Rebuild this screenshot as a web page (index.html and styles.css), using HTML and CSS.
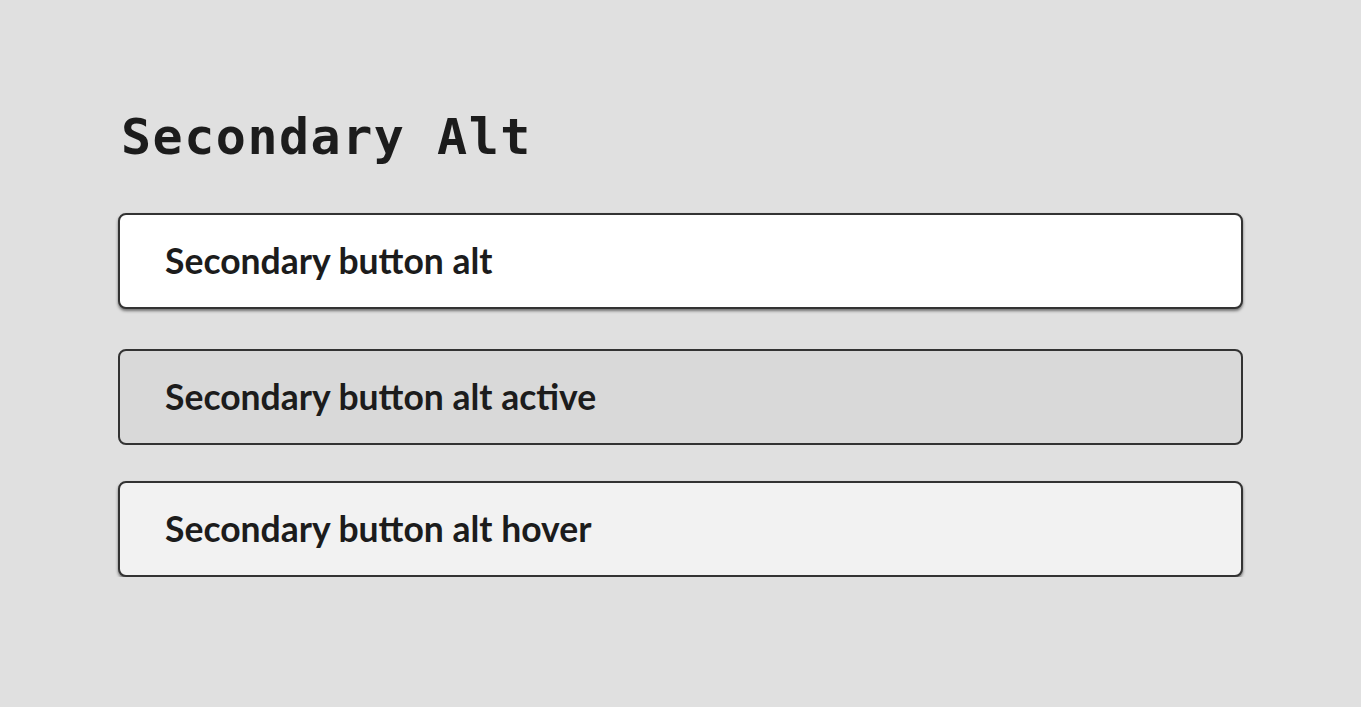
FILE: index.html
```html
<!DOCTYPE html>
<html lang="en">
<head>
<meta charset="utf-8">
<title>Secondary Alt</title>
<link rel="stylesheet" href="styles.css">
</head>
<body>
<main class="page">
  <h1 class="title">Secondary Alt</h1>
  <div class="buttons">
    <button class="btn">Secondary button alt</button>
    <button class="btn btn-active">Secondary button alt active</button>
    <button class="btn btn-hover">Secondary button alt hover</button>
  </div>
</main>
</body>
</html>
```

FILE: styles.css
```css
html, body {
  margin: 0;
  padding: 0;
  background: #e0e0e0;
}
.page {
  width: 1125px;
  padding: 107px 0 0 118px;
}
.title {
  margin: 0 0 46px 3px;
  font-family: "DejaVu Sans Mono", monospace;
  font-weight: bold;
  font-size: 50px;
  line-height: 60px;
  letter-spacing: 1.5px;
  color: #1c1c1c;
}
.buttons {
  display: flex;
  flex-direction: column;
  gap: 36px;
}
.btn {
  box-sizing: border-box;
  width: 1125px;
  height: 96px;
  margin: 0;
  padding: 0 0 2px 45px;
  text-align: left;
  border: 2px solid #333333;
  border-radius: 8px;
  background: #ffffff;
  box-shadow: 0 2px 3px rgba(0, 0, 0, 0.5);
  font-family: Lato, "Open Sans", sans-serif;
  font-weight: bold;
  font-size: 35.5px;
  color: #1c1c1c;
}
.btn-active {
  margin-top: 4px;
  background: #d9d9d9;
  box-shadow: none;
}
.btn-hover {
  background: #f2f2f2;
}
```
